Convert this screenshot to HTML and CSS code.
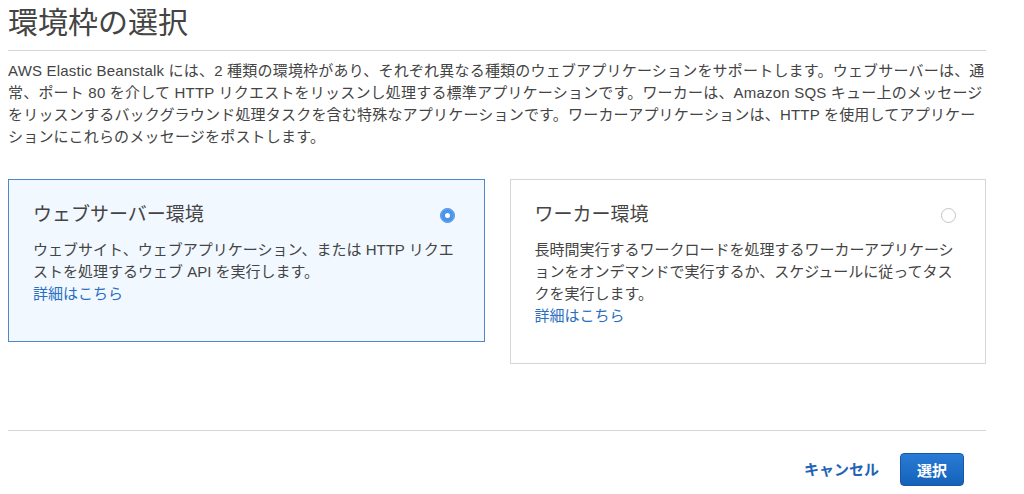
FILE: index.html
```html
<!DOCTYPE html>
<html lang="ja">
<head>
  <meta charset="UTF-8">
  <meta name="viewport" content="width=device-width, initial-scale=1.0">
  <title>環境枠の選択</title>
  <link rel="stylesheet" href="styles.css">
</head>
<body>
  <div class="container">
    <h1>環境枠の選択</h1>

    <p class="intro">AWS Elastic Beanstalk には、2 種類の環境枠があり、それぞれ異なる種類のウェブアプリケーションをサポートします。ウェブサーバーは、通常、ポート 80 を介して HTTP リクエストをリッスンし処理する標準アプリケーションです。ワーカーは、Amazon SQS キュー上のメッセージをリッスンするバックグラウンド処理タスクを含む特殊なアプリケーションです。ワーカーアプリケーションは、HTTP を使用してアプリケーションにこれらのメッセージをポストします。</p>

    <div class="tiers">
      <label class="tier selected">
        <div class="tier-head">
          <span class="tier-title">ウェブサーバー環境</span>
          <input type="radio" name="tier" class="radio" checked>
        </div>
        <p class="tier-desc">ウェブサイト、ウェブアプリケーション、または HTTP リクエストを処理するウェブ API を実行します。</p>
        <a href="#" class="more">詳細はこちら</a>
      </label>

      <label class="tier">
        <div class="tier-head">
          <span class="tier-title">ワーカー環境</span>
          <input type="radio" name="tier" class="radio">
        </div>
        <p class="tier-desc">長時間実行するワークロードを処理するワーカーアプリケーションをオンデマンドで実行するか、スケジュールに従ってタスクを実行します。</p>
        <a href="#" class="more">詳細はこちら</a>
      </label>
    </div>

    <div class="footer">
      <a href="#" class="cancel">キャンセル</a>
      <button class="button">選択</button>
    </div>
  </div>

  <script>
    // highlight the card whose radio is checked
    document.querySelectorAll('.tier .radio').forEach(function (radio) {
      radio.addEventListener('change', function () {
        document.querySelectorAll('.tier').forEach(function (card) {
          card.classList.toggle('selected', card.querySelector('.radio').checked);
        });
      });
    });
  </script>
</body>
</html>
```

FILE: styles.css
```css
body {
  font-family: "Liberation Sans", "Noto Sans CJK JP", sans-serif;
  font-size: 15px;
  line-height: 22px;
  margin: 0;
  color: #444;
  background: #fff;
}
.container {
  width: 978px;
  padding: 0 8px;
}
h1 {
  font-size: 30px;
  font-weight: normal;
  line-height: 36px;
  margin: 5px 0 0;
  padding-bottom: 9px;
  border-bottom: 1px solid #d5d5d5;
  color: #444;
}
.intro {
  margin: 9px 0 0;
  letter-spacing: 0.2px;
  line-break: normal;
}
.tiers {
  display: flex;
  align-items: flex-start;
  gap: 25px;
  margin-top: 31px;
}
.tier {
  flex: 1;
  display: block;
  border: 1px solid #d5d5d5;
  background-color: #fff;
  padding: 21px 29px 36px 24px;
  cursor: pointer;
}
.tier.selected {
  border-color: #4f88c9;
  background-color: #f1f8ff;
}
.tier-head {
  display: flex;
  justify-content: space-between;
  align-items: center;
  margin-bottom: 10px;
}
.tier-title {
  font-size: 19px;
  line-height: 28px;
  color: #444;
}
.radio {
  appearance: none;
  -webkit-appearance: none;
  width: 15px;
  height: 15px;
  margin: 0;
  border: 1px solid #c4c4c4;
  border-radius: 50%;
  background: #fff;
}
.radio:checked {
  border-color: #4a94ea;
  background: #4a94ea;
  box-shadow: inset 0 0 0 4px #4a94ea, inset 0 0 0 8px #fff;
}
.tier-desc {
  margin: 0;
}
.more {
  color: #2a6ebf;
  text-decoration: none;
}
.footer {
  display: flex;
  justify-content: flex-end;
  align-items: center;
  gap: 21px;
  margin-top: 66px;
  padding: 22px 22px 0 0;
  border-top: 1px solid #d5d5d5;
}
.cancel {
  color: #2164b5;
  font-weight: bold;
  text-decoration: none;
}
.button {
  font-family: inherit;
  font-size: 15px;
  font-weight: bold;
  color: #fff;
  height: 33px;
  padding: 0 16px;
  border: 1px solid #1857a4;
  border-radius: 4px;
  background: linear-gradient(#2a7bd6, #1462b9);
  cursor: pointer;
}
```
